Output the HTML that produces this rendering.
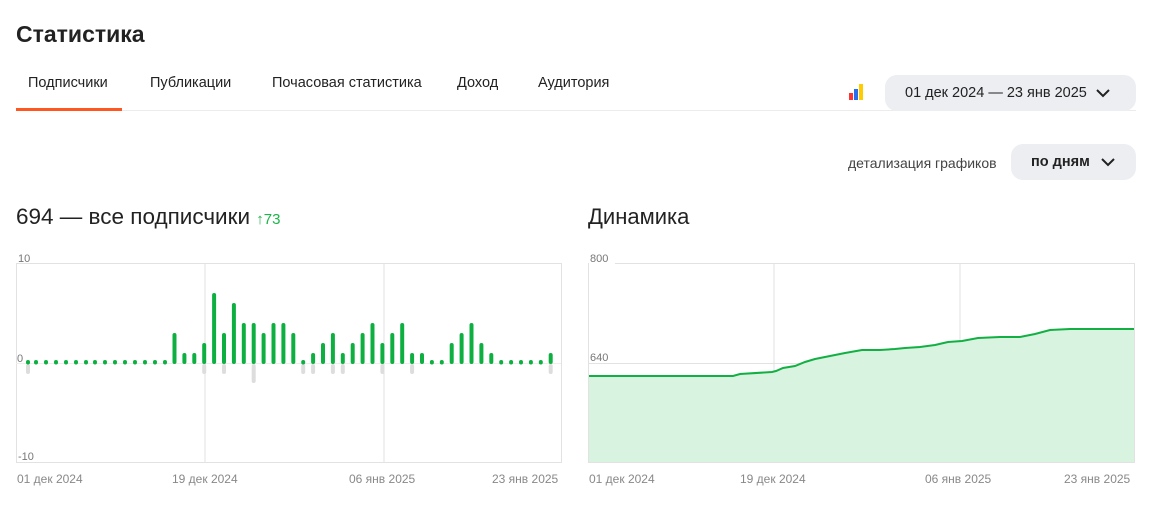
<!DOCTYPE html>
<html><head><meta charset="utf-8"><style>
body{margin:0;width:1176px;height:523px;background:#fff;font-family:"Liberation Sans","DejaVu Sans",sans-serif;color:#222;position:relative;overflow:hidden}
.a{position:absolute;white-space:nowrap}
.tab{position:absolute;top:75px;font-size:14.5px;color:#222}
.btn{position:absolute;background:#eceef2;border-radius:12px;font-size:14.5px;color:#222;display:flex;align-items:center}
</style></head><body>
<div class="a" style="left:16px;top:21px;font-size:23px;font-weight:bold">Статистика</div>
<div class="tab" style="left:28px">Подписчики</div>
<div class="tab" style="left:150px">Публикации</div>
<div class="tab" style="left:272px">Почасовая статистика</div>
<div class="tab" style="left:457px">Доход</div>
<div class="tab" style="left:538px">Аудитория</div>
<div class="a" style="left:16px;top:110px;width:1120px;height:1px;background:#ececec"></div>
<div class="a" style="left:16px;top:108px;width:106px;height:3px;background:#ff5722"></div>
<svg class="a" style="left:848px;top:83px" width="20" height="18"><rect x="1" y="10" width="4" height="7" fill="#f33"/><rect x="6" y="6" width="4" height="11" fill="#2a6ef0"/><rect x="11" y="1" width="4" height="16" fill="#fc0"/></svg>
<div class="btn" style="left:885px;top:75px;width:251px;height:36px"><span style="margin-left:20px">01 дек 2024 — 23 янв 2025</span><svg style="margin-left:9px" width="14" height="10"><path d="M1 2l6 6 6-6" stroke="#222" stroke-width="2" fill="none"/></svg></div>
<div class="a" style="left:848px;top:155px;font-size:14px;color:#444">детализация графиков</div>
<div class="btn" style="left:1011px;top:144px;width:125px;height:36px"><span style="margin-left:20px;font-weight:bold">по дням</span><svg style="margin-left:11px" width="14" height="10"><path d="M1 2l6 6 6-6" stroke="#222" stroke-width="2" fill="none"/></svg></div>
<div class="a" style="left:16px;top:204px;font-size:22.5px">694 — все подписчики <span style="font-size:15px;color:#1db54a">↑73</span></div>
<div class="a" style="left:588px;top:204px;font-size:22px">Динамика</div>
<svg class="a" style="left:0;top:0" width="1176" height="523">
<g fill="none" stroke="#e2e2e2" stroke-width="1">
<rect x="16.5" y="263.5" width="545" height="199"/>
<line x1="205" y1="263" x2="205" y2="462"/><line x1="384" y1="263" x2="384" y2="462"/>
<line x1="16" y1="363.5" x2="561" y2="363.5" stroke="#eee"/>
<rect x="588.5" y="263.5" width="546" height="199"/>
<line x1="774" y1="263" x2="774" y2="462"/><line x1="960" y1="263" x2="960" y2="462"/>
<line x1="588" y1="363.5" x2="1134" y2="363.5"/>
</g>
<g font-size="11" fill="#777">
<text x="18" y="262">10</text><text x="17" y="362">0</text><text x="18" y="460">-10</text>
<rect x="589" y="250" width="26" height="14" fill="#fff"/><text x="590" y="262">800</text>
<rect x="589" y="350" width="26" height="13" fill="#fff"/><text x="590" y="361">640</text>
<rect x="589" y="448" width="24" height="13" fill="#fff"/><text x="590" y="459">480</text>
</g>
<g font-size="12" fill="#888">
<text x="17" y="483">01 дек 2024</text><text x="172" y="483">19 дек 2024</text><text x="349" y="483">06 янв 2025</text><text x="492" y="483">23 янв 2025</text>
<text x="589" y="483">01 дек 2024</text><text x="740" y="483">19 дек 2024</text><text x="925" y="483">06 янв 2025</text><text x="1064" y="483">23 янв 2025</text>
</g>
<g stroke="#ddd" stroke-width="4" stroke-linecap="round">
<line x1="28" y1="366" x2="28" y2="372"/><line x1="204.2" y1="366" x2="204.2" y2="372"/><line x1="224" y1="366" x2="224" y2="372"/><line x1="253.7" y1="366" x2="253.7" y2="381"/><line x1="303.2" y1="366" x2="303.2" y2="372"/><line x1="313.1" y1="366" x2="313.1" y2="372"/><line x1="332.9" y1="366" x2="332.9" y2="372"/><line x1="342.8" y1="366" x2="342.8" y2="372"/><line x1="382.4" y1="366" x2="382.4" y2="372"/><line x1="412.1" y1="366" x2="412.1" y2="372"/><line x1="550.7" y1="366" x2="550.7" y2="372"/>
</g>
<g stroke="#0db040" stroke-width="4" stroke-linecap="round">
<path d="M28 362v0.5M36 362v.5M46 362v.5M56 362v.5M66 362v.5M76 362v.5M86 362v.5M95 362v.5M105 362v.5M115 362v.5M125 362v.5M135 362v.5M145 362v.5M155 362v.5M165 362v.5
M174.5 362v-27M184.4 362v-7M194.3 362v-7M204.2 362v-17M214.1 362v-67M224 362v-27M233.9 362v-57M243.8 362v-37M253.7 362v-37M263.6 362v-27M273.5 362v-37M283.4 362v-37M293.3 362v-27M303.2 362v.5M313.1 362v-7M323 362v-17M332.9 362v-27M342.8 362v-7M352.7 362v-17M362.6 362v-27M372.5 362v-37M382.4 362v-17M392.3 362v-27M402.2 362v-37M412.1 362v-7M422 362v-7M431.9 362v.5M441.8 362v.5M451.7 362v-17M461.6 362v-27M471.5 362v-37M481.4 362v-17M491.3 362v-7M501.2 362v.5M511.1 362v.5M521 362v.5M530.9 362v.5M540.8 362v.5M550.7 362v-7" fill="none"/>
</g>
<path d="M589 376L733 376L740 374L772 372L776 371L783 368L795 366L805 362L815 359L830 356L845 353L862 350L880 350L895 349L905 348L920 347L935 345L948 342L962 341L978 338L1000 337L1020 337L1035 334L1050 330L1070 329L1134 329L1134 462L589 462Z" fill="#d8f3e0"/>
<path d="M589 376L733 376L740 374L772 372L776 371L783 368L795 366L805 362L815 359L830 356L845 353L862 350L880 350L895 349L905 348L920 347L935 345L948 342L962 341L978 338L1000 337L1020 337L1035 334L1050 330L1070 329L1134 329" fill="none" stroke="#12b043" stroke-width="2"/>
</svg>
</body></html>
